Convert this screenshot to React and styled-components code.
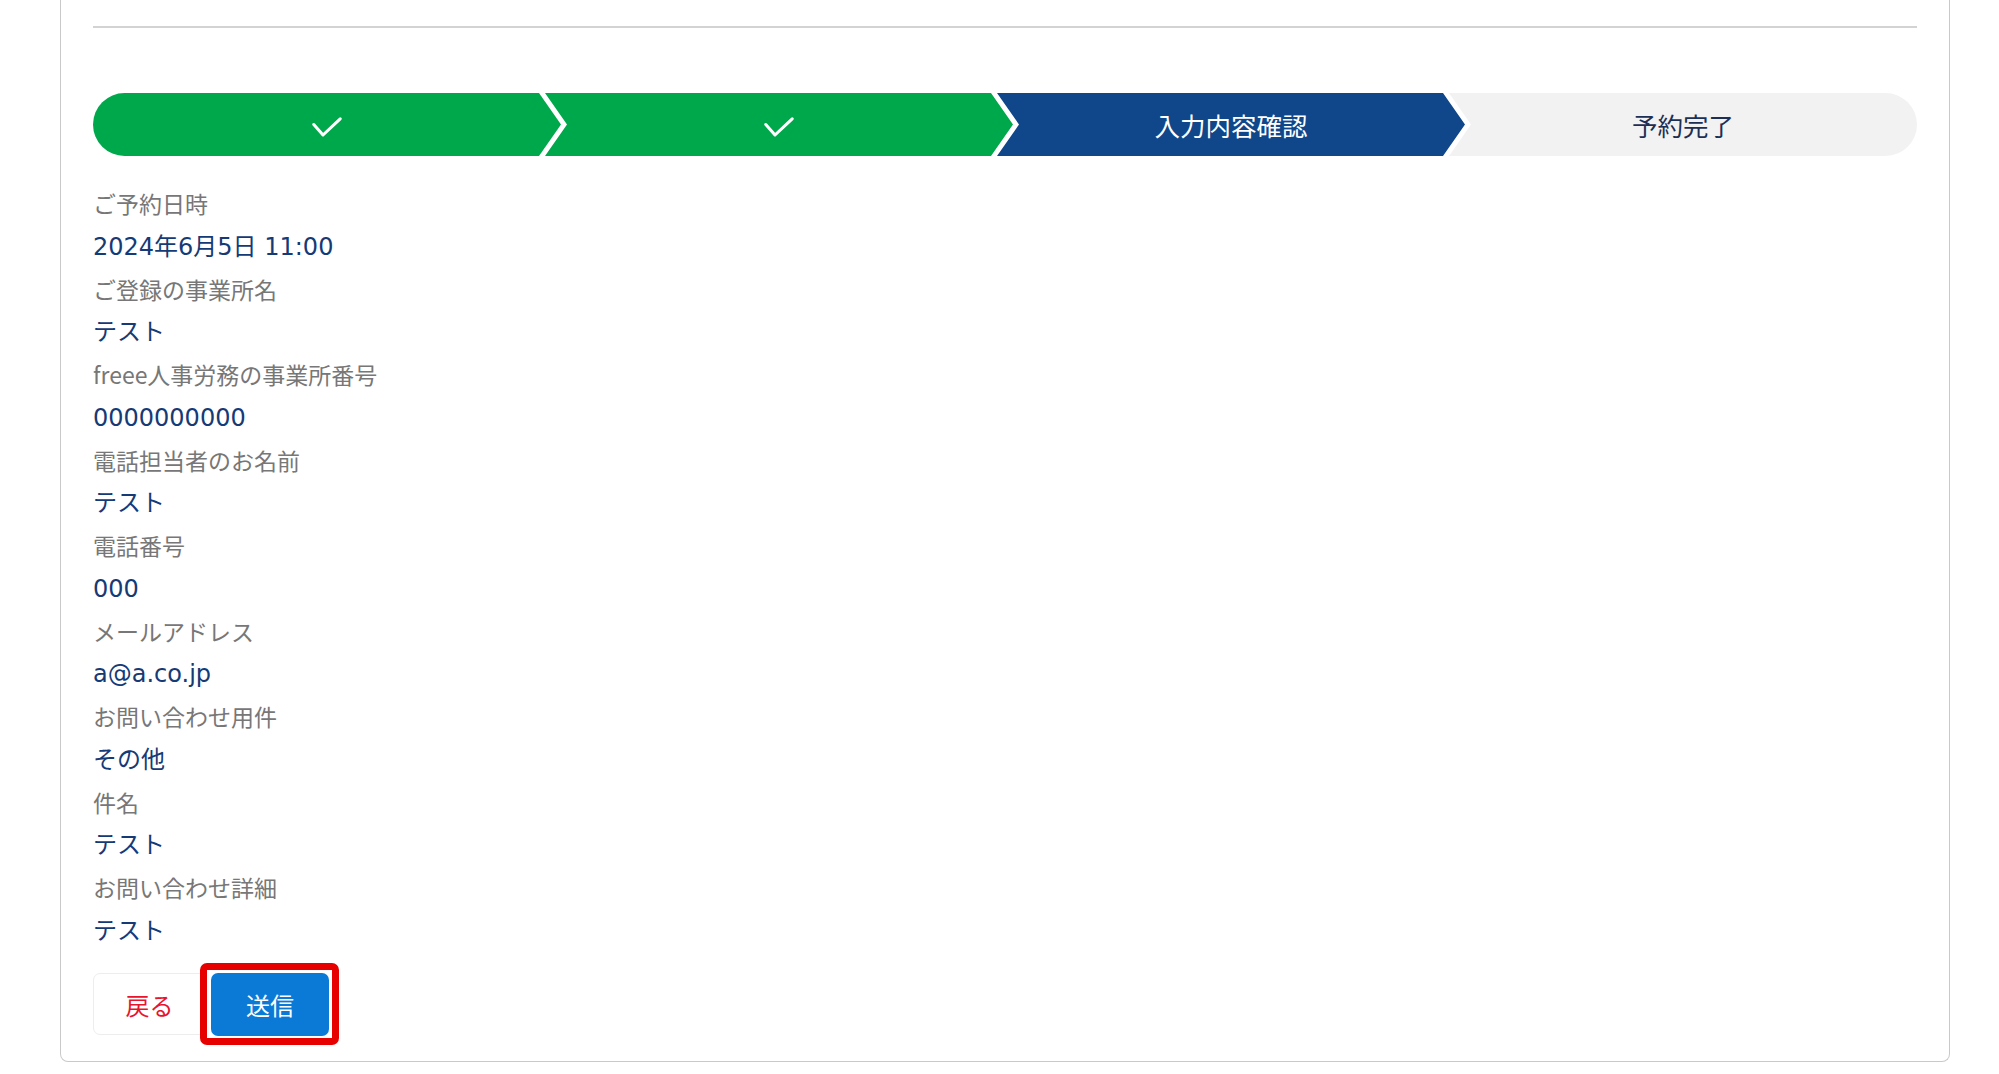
import React from 'react';
import styled, { createGlobalStyle } from 'styled-components';

const GlobalStyle = createGlobalStyle`
  body {
    margin: 0;
    background: #fff;
    font-family: "Noto Sans CJK JP", "Noto Sans", sans-serif;
    overflow: hidden;
  }
`;

const Page = styled.div`
  padding: 0 49px 0 60px;
`;

const Card = styled.div`
  border: 1.5px solid #c9c9c9;
  border-top: none;
  border-radius: 0 0 8px 8px;
  padding: 26px 32px 25px 32px;
`;

const Divider = styled.hr`
  margin: 0;
  border: none;
  height: 2px;
  background: #d3d3d3;
`;

const Stepper = styled.ol`
  display: flex;
  list-style: none;
  margin: 65px 0 0;
  padding: 0;
  height: 63px;
`;

const stepColors = {
  done: { bg: '#00a84c', fg: '#fff' },
  active: { bg: '#10468a', fg: '#fff' },
  todo: { bg: '#f2f2f2', fg: '#1d2f55' },
};

const Step = styled.li`
  flex: 1;
  display: flex;
  align-items: center;
  justify-content: center;
  background: ${({ $state }) => stepColors[$state].bg};
  color: ${({ $state }) => stepColors[$state].fg};
  font-size: 25.5px;
  margin-left: ${({ $first }) => ($first ? '0' : '-16px')};
  border-radius: ${({ $first, $last }) =>
    $first ? '32px 0 0 32px' : $last ? '0 32px 32px 0' : '0'};
  clip-path: ${({ $first, $last }) =>
    $first
      ? 'polygon(0 0, calc(100% - 22px) 0, 100% 50%, calc(100% - 22px) 100%, 0 100%)'
      : $last
      ? 'polygon(0 0, 100% 0, 100% 100%, 0 100%, 22px 50%)'
      : 'polygon(0 0, calc(100% - 22px) 0, 100% 50%, calc(100% - 22px) 100%, 0 100%, 22px 50%)'};
`;

const CheckMark = styled.svg`
  margin-top: 6px;
`;

const Check = () => (
  <CheckMark width="30" height="21" viewBox="0 0 30 21" fill="none">
    <polyline
      points="1.8,7.5 11,18 28.2,1.8"
      stroke="#fff"
      strokeWidth="3"
      strokeLinecap="round"
      strokeLinejoin="round"
    />
  </CheckMark>
);

const Details = styled.dl`
  margin: 27px 0 0;
`;

const Label = styled.dt`
  height: 41.5px;
  font-size: 23px;
  line-height: 41.5px;
  color: #777;
`;

const Value = styled.dd`
  height: 44px;
  margin: 0;
  font-family: "DejaVu Sans", "Noto Sans CJK JP", sans-serif;
  font-size: 24px;
  line-height: 44px;
  color: #153a75;
`;

const Actions = styled.div`
  display: flex;
  align-items: center;
  gap: 5px;
  margin-top: 20px;
`;

const Button = styled.button`
  height: 62px;
  border-radius: 7px;
  font-family: inherit;
  font-size: 24px;
  cursor: pointer;
`;

const BackButton = styled(Button)`
  width: 113px;
  background: #fff;
  border: 1.5px solid #ededed;
  color: #e8142c;
`;

const SendButton = styled(Button)`
  width: 118px;
  height: 63px;
  background: #0a7ad6;
  border: none;
  color: #fff;
`;

const Highlight = styled.span`
  position: relative;
  display: inline-flex;

  &::after {
    content: '';
    position: absolute;
    inset: -10px -10px -9px -11px;
    border: 7px solid #e60000;
    border-radius: 7px;
    pointer-events: none;
  }
`;

const steps = [
  { state: 'done' },
  { state: 'done' },
  { state: 'active', label: '入力内容確認' },
  { state: 'todo', label: '予約完了' },
];

const rows = [
  ['ご予約日時', '2024年6月5日 11:00'],
  ['ご登録の事業所名', 'テスト'],
  ['freee人事労務の事業所番号', '0000000000'],
  ['電話担当者のお名前', 'テスト'],
  ['電話番号', '000'],
  ['メールアドレス', 'a@a.co.jp'],
  ['お問い合わせ用件', 'その他'],
  ['件名', 'テスト'],
  ['お問い合わせ詳細', 'テスト'],
];

const App = () => {
  return (
    <Page>
      <GlobalStyle />
      <Card>
        <Divider />
        <Stepper>
          {steps.map((s, i) => (
            <Step
              key={i}
              $state={s.state}
              $first={i === 0}
              $last={i === steps.length - 1}
            >
              {s.state === 'done' ? <Check /> : s.label}
            </Step>
          ))}
        </Stepper>
        <Details>
          {rows.map(([label, value]) => (
            <React.Fragment key={label}>
              <Label>{label}</Label>
              <Value>{value}</Value>
            </React.Fragment>
          ))}
        </Details>
        <Actions>
          <BackButton type="button">戻る</BackButton>
          <Highlight>
            <SendButton type="submit">送信</SendButton>
          </Highlight>
        </Actions>
      </Card>
    </Page>
  );
};

export default App;
